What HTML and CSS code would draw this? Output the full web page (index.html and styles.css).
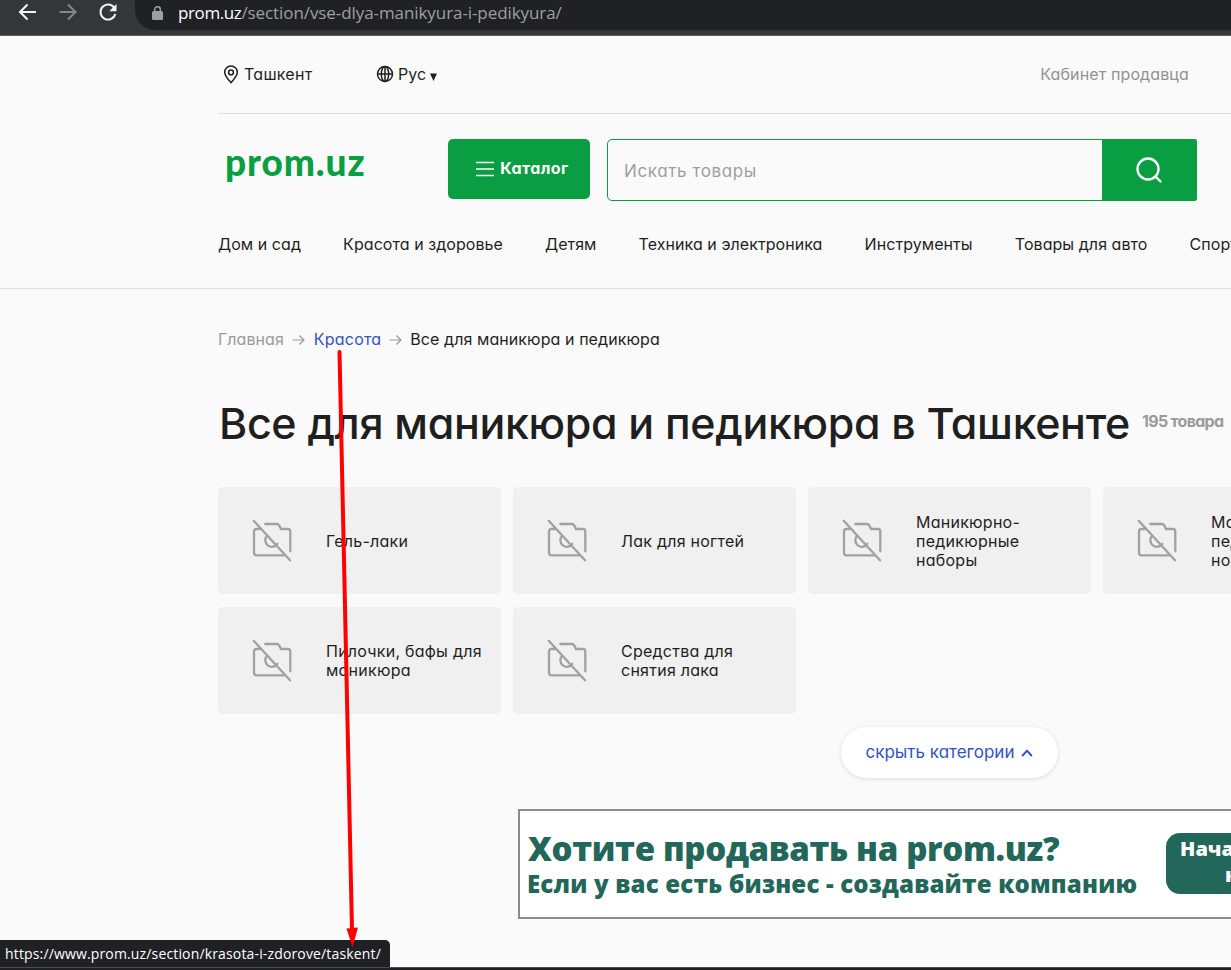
FILE: index.html
```html
<!DOCTYPE html>
<html lang="ru">
<head>
<meta charset="utf-8">
<title>Все для маникюра и педикюра в Ташкенте</title>
<link rel="stylesheet" href="styles.css">
</head>
<body>
<svg class="defs" aria-hidden="true">
  <symbol id="no-photo" viewBox="0 0 40 43">
    <path d="M1.700 1.800 38 41.300M8 10H4.500Q2 10 2 12.500V33.800Q2 36.300 4.500 36.300H33.500M13.300 5H25Q26.400 5 27.200 6.400L29 10H36Q38.300 10 38.300 12.500V32.300M14.700 17.300A6.500 6.500 0 1 0 25.300 24.800"/>
  </symbol>
</svg>
<div class="browser">
  <svg class="browser-icons" width="135" height="35" viewBox="0 0 135 35">
    <path class="back" d="M36 12H20.500M27.500 4.500 20 12l7.500 7.500"/>
    <path class="forward" d="M59.500 12H75M68 4.500 75.500 12 68 19.500"/>
    <path class="reload" d="M114.500 8.200A7.500 7.500 0 1 0 115.300 14"/>
    <path class="reload-tip" d="M116.500 4v7.300h-7.300z"/>
  </svg>
  <div class="address">
    <svg width="11" height="14" viewBox="0 0 11 14"><rect x="0" y="5" width="11" height="9" rx="1.500" fill="#9aa0a6"/><path d="M2.700 6V3.500a2.800 2.800 0 0 1 5.600 0V6" fill="none" stroke="#9aa0a6" stroke-width="1.500"/></svg>
    <span class="url"><b>prom.uz</b>/section/vse-dlya-manikyura-i-pedikyura/</span>
  </div>
</div>

<header class="header">
  <div class="topline">
    <svg class="pin" width="16" height="19" viewBox="0 0 16 19"><path d="M8 17.700C4.500 13.700 1.700 10.700 1.700 7.200a6.300 6.300 0 0 1 12.600 0c0 3.500-2.800 6.500-6.300 10.500z"/><circle cx="8" cy="7.400" r="2.400"/></svg>
    <span class="city">Ташкент</span>
    <svg class="globe" width="18" height="18" viewBox="0 0 18 18"><circle cx="9" cy="9" r="7.500"/><ellipse cx="9" cy="9" rx="3.700" ry="7.500"/><path d="M1.500 9h15M9 1.500v15"/></svg>
    <span class="lang">Рус</span>
    <svg class="caret" width="7" height="8" viewBox="0 0 7 8"><path d="M0 0.500h7L3.500 8z"/></svg>
    <a class="cabinet">Кабинет продавца</a>
  </div>
  <div class="main-row">
    <a class="logo">prom.uz</a>
    <button class="catalog"><svg width="18" height="16" viewBox="0 0 18 16"><path d="M0 1.500h18M0 8h18M0 14.500h18"/></svg><span>Каталог</span></button>
    <div class="search">
      <span class="placeholder">Искать товары</span>
      <span class="search-btn"><svg width="30" height="30" viewBox="0 0 30 30"><circle cx="14" cy="14" r="10.500"/><path d="m21.800 21.800 4.700 4.700"/></svg></span>
    </div>
  </div>
  <nav class="nav"><a>Дом и сад</a><a>Красота и здоровье</a><a>Детям</a><a>Техника и электроника</a><a>Инструменты</a><a>Товары для авто</a><a>Спорт</a></nav>
</header>

<main class="content">
  <div class="crumbs">
    <a>Главная</a>
    <svg width="13" height="12" viewBox="0 0 13 12"><path d="M.5 6h11.500M7.300 1.500 12 6l-4.700 4.500"/></svg>
    <a class="link">Красота</a>
    <svg width="13" height="12" viewBox="0 0 13 12"><path d="M.5 6h11.500M7.300 1.500 12 6l-4.700 4.500"/></svg>
    <span class="current">Все для маникюра и педикюра</span>
  </div>
  <div class="heading"><h1>Все для маникюра и педикюра в Ташкенте</h1><span class="count">195 товара</span></div>
  <div class="grid">
    <a class="card"><svg><use href="#no-photo"/></svg><span>Гель-лаки</span></a>
    <a class="card"><svg><use href="#no-photo"/></svg><span>Лак для ногтей</span></a>
    <a class="card"><svg><use href="#no-photo"/></svg><span>Маникюрно-<br>педикюрные<br>наборы</span></a>
    <a class="card"><svg><use href="#no-photo"/></svg><span>Маникюрные,<br>педикюрные<br>ножницы</span></a>
    <a class="card"><svg><use href="#no-photo"/></svg><span>Пилочки, бафы для<br>маникюра</span></a>
    <a class="card"><svg><use href="#no-photo"/></svg><span>Средства для<br>снятия лака</span></a>
  </div>
  <button class="toggle">скрыть категории<svg width="12" height="8" viewBox="0 0 12 8"><path d="M1.200 7 6 1.700 10.800 7"/></svg></button>
  <div class="banner">
    <div class="banner-text">
      <div class="banner-title">Хотите продавать на prom.uz?</div>
      <div class="banner-sub">Если у вас есть бизнес - создавайте компанию</div>
    </div>
    <div class="banner-btn"><div>Начать продавать</div><div class="second">как компания</div></div>
  </div>
</main>

<div class="status">https://www.prom.uz/section/krasota-i-zdorove/taskent/</div>
<div class="taskbar"></div>
<svg class="pointer" width="1231" height="970" viewBox="0 0 1231 970"><path class="shaft" d="M339.500 352 352 930"/><path class="tip" d="M346.500 928.500 358 927.500 352.500 947z"/></svg>
</body>
</html>
```
FILE: styles.css
```css
* { box-sizing: border-box; }
body {
  position: relative;
  margin: 0;
  width: 1231px;
  height: 970px;
  overflow: hidden;
  background: #fafafa;
  color: #1f1f1f;
  font: 16px/19px Inter, "Open Sans", sans-serif;
  font-feature-settings: "cv11";
  letter-spacing: .06px;
}
button { font: inherit; letter-spacing: inherit; font-feature-settings: inherit; border: 0; padding: 0; }
svg { flex: none; fill: none; }
.defs { display: none; }

.browser { display: flex; height: 36px; background: #35363a; border-bottom: 1px solid #5d5d5d; }
.browser-icons { stroke-width: 2; }
.back, .reload { stroke: #f1f3f4; stroke-width: 2; }
.forward { stroke: #85868a; }
.reload-tip { fill: #f1f3f4; }
.address {
  display: flex;
  align-items: center;
  gap: 15px;
  flex: 1;
  height: 30px;
  padding: 0 0 4px 17px;
  background: #202124;
  border-radius: 0 0 0 20px;
}
.url { color: #9aa0a6; font: 17px/22px "Open Sans", sans-serif; letter-spacing: -.08px; white-space: nowrap; }
.url b { color: #fff; font-weight: 400; letter-spacing: -.4px; }

.header { height: 253px; padding-left: 218px; border-bottom: 1px solid #e0e0e0; }
.topline { display: flex; align-items: center; height: 78px; padding: 0 42px 1px 5px; border-bottom: 1px solid #e0e0e0; }
.pin, .globe { stroke: #1f1f1f; stroke-width: 1.5; }
.city { margin-left: 5px; width: 132px; letter-spacing: .25px; }
.lang { margin: 0 3px 0 4px; }
.caret { margin: 5px 0 0 1px; fill: #1f1f1f; }
.cabinet { margin-left: auto; color: #929292; letter-spacing: .13px; }

.main-row { display: flex; padding: 25px 34px 0 7px; height: 87px; }
.logo { width: 223px; color: #0a9e42; font: 900 37px/46px Lato, sans-serif; letter-spacing: .9px; }
.catalog {
  display: flex;
  align-items: center;
  justify-content: center;
  gap: 6px;
  width: 142px;
  height: 60px;
  padding-left: 7px;
  border-radius: 5px;
  background: #0a9e42;
  color: #fff;
  font-weight: 700;
  letter-spacing: .4px;
}
.catalog svg { stroke: #fff; stroke-width: 1.6; }
.catalog span { padding-bottom: 2px; }
.search { display: flex; flex: 1; height: 62px; margin-left: 17px; border: 1px solid #0a9e42; border-radius: 5px 2px 2px 5px; }
.placeholder { flex: 1; padding: 22px 16px; color: #9e9e9e; font-size: 17px; letter-spacing: .6px; }
.search-btn { display: flex; align-items: center; justify-content: center; width: 94px; background: #0a9e42; }
.search-btn svg { stroke: #fff; stroke-width: 2.4; stroke-linecap: round; }
.nav { display: flex; gap: 42.1px; padding: 34px 0 0; white-space: nowrap; }

.content { padding-left: 218px; }
.crumbs { display: flex; align-items: center; padding-top: 41px; height: 60px; color: #9a9a9a; }
.crumbs svg { margin: 1px 9px 0 8px; stroke: #9a9a9a; stroke-width: 1.200; }
.crumbs .link { color: #3352c4; letter-spacing: .2px; }
.crumbs .current { color: #1f1f1f; margin-left: -1px; letter-spacing: .08px; }
.heading { display: flex; align-items: center; height: 138px; padding-bottom: 12px; white-space: nowrap; }
h1 { margin: 22px 0 0; padding-left: 1px; width: 924px; font-size: 43px; line-height: 56px; font-weight: 500; letter-spacing: -.35px; }
.count { margin-top: 19px; color: #9a9a9a; font-weight: 700; letter-spacing: -.7px; }
.grid { display: grid; grid-template-columns: repeat(4, 283px); grid-auto-rows: 107px; gap: 13px 12px; }
.card { display: flex; align-items: center; gap: 34px; padding-left: 34px; border-radius: 5px; background: #f0f0f0; letter-spacing: .25px; white-space: nowrap; }
.card svg { width: 40px; height: 43px; stroke: #a1a1a1; stroke-width: 2.3; stroke-linecap: round; }
.card span { padding-top: 1px; }
.toggle {
  display: flex;
  align-items: center;
  justify-content: center;
  gap: 7px;
  width: 217px;
  height: 51px;
  margin: 13px 0 0 623px;
  border-radius: 26px;
  background: #fff;
  box-shadow: 0 1px 4px rgba(0, 0, 0, .13);
  color: #3352c4;
  font-size: 17px;
  letter-spacing: 0;
}
.toggle svg { stroke: #3352c4; stroke-width: 2; margin-top: 1px; }
.banner {
  display: flex;
  width: 930px;
  height: 110px;
  margin: 31px 0 0 300px;
  border: 2px solid #8e8c8b;
  background: #fff;
  color: #22675a;
  font-family: "Open Sans", sans-serif;
  font-weight: 800;
  white-space: nowrap;
}
.banner-text { width: 646px; padding: 18px 0 0 7px; }
.banner-title { padding-left: 1px; font-size: 33px; line-height: 40px; letter-spacing: -.33px; }
.banner-sub { font-size: 24px; line-height: 30px; letter-spacing: .2px; }
.banner-btn { width: 220px; height: 61px; margin-top: 22px; padding: 3px 0 0 14px; border-radius: 14px; background: #22675a; color: #fff; font-size: 20px; line-height: 26px; }
.second { padding-left: 45px; }

.status {
  position: absolute;
  left: 0;
  top: 940px;
  width: 390px;
  height: 28px;
  padding-left: 5px;
  border-radius: 0 5px 0 0;
  background: #202124;
  color: #fff;
  font: 14px/27px "Open Sans", sans-serif;
  letter-spacing: .15px;
  white-space: nowrap;
}
.taskbar { position: absolute; left: 0; top: 967px; width: 100%; height: 3px; background: #202124; border-top: 1px solid #4d4d4f; }
.pointer { position: absolute; left: 0; top: 0; }
.shaft { stroke: #f00; stroke-width: 4; stroke-linecap: round; }
.tip { fill: #f00; }
```
